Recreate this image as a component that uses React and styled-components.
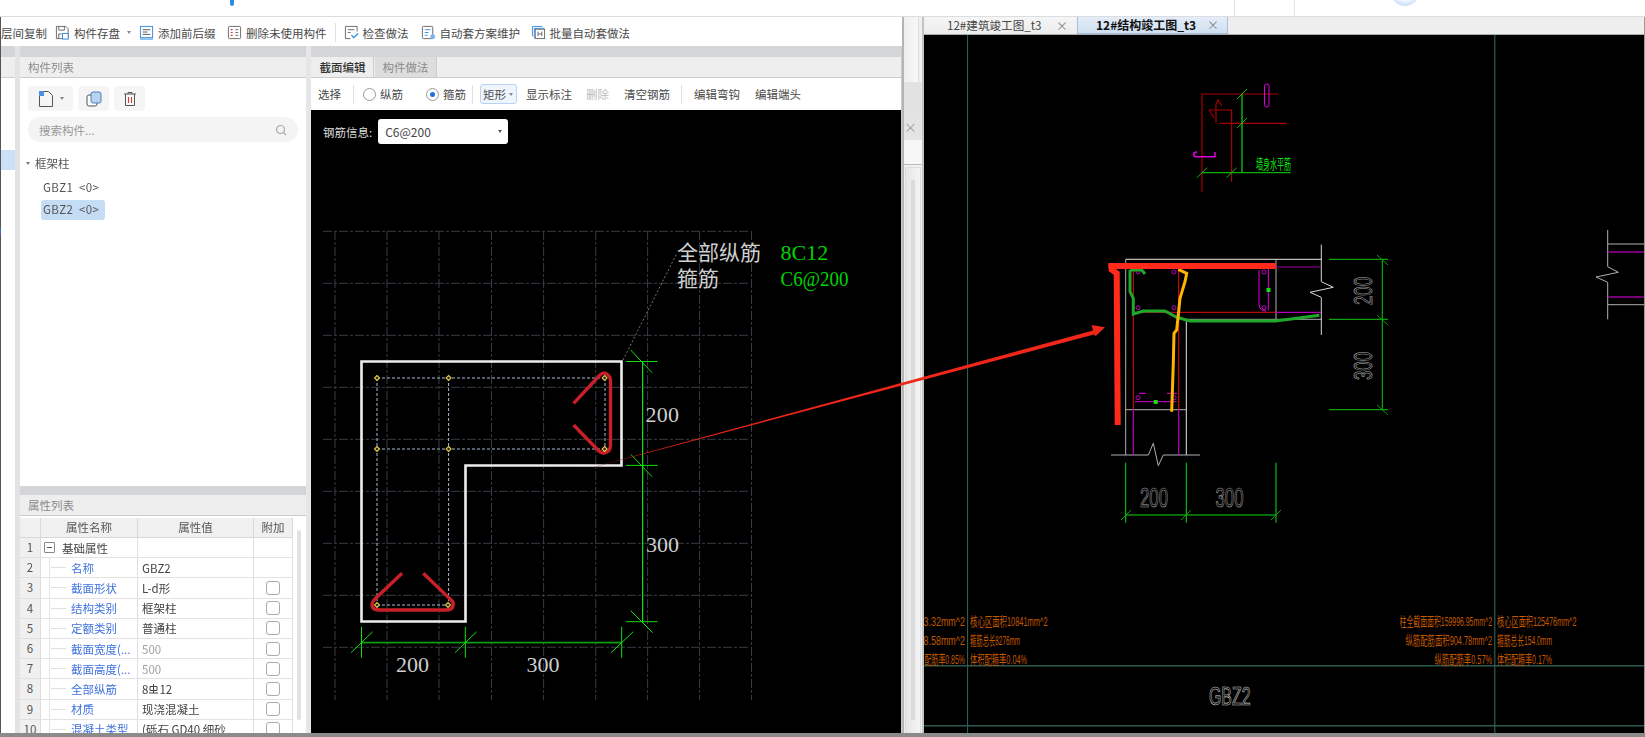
import React from "react";
import styled, { createGlobalStyle } from "styled-components";

const UI = '"Noto Sans CJK SC", "Noto Sans", sans-serif';
const CAD = '"Liberation Serif", "Noto Sans CJK SC", serif';
const THIN = '"Liberation Sans", "Noto Sans CJK SC", sans-serif';

const Global = createGlobalStyle`
  html, body { margin: 0; padding: 0; background: #fff; overflow: hidden; }
  * { box-sizing: border-box; }
`;

const Page = styled.div`
  position: relative; width: 1645px; height: 737px; overflow: hidden;
  display: flex; flex-direction: column; font-family: ${UI}; font-size: 11.5px; color: #444;
`;
const TopStrip = styled.div`
  height: 17px; flex: none; background: #fff; border-bottom: 1px solid #dcdde0;
  display: flex; overflow: hidden;
`;
const TopSliver = styled.div`
  width: 4px; height: 6px; margin-left: 230px; background: #2f8de4; border-radius: 0 0 2px 2px;
`;
const TopDivider = styled.div`
  width: 1px; height: 16px; background: #e4e4e4; margin-left: ${p => p.$ml}px;
`;
const TopBubble = styled.div`
  width: 28px; height: 28px; margin-left: 96px; margin-top: -22px; border-radius: 50%;
  background: radial-gradient(circle at 50% 40%, #fff 45%, #cfe2fa 72%);
`;
const Main = styled.div`flex: 1; display: flex; min-height: 0;`;
const StatusBar = styled.div`height: 4px; flex: none; background: #8b8b8b;`;

const Workspace = styled.div`
  width: 902px; flex: none; display: flex; flex-direction: column; min-height: 0;
  border-left: 1px solid #555; filter: blur(0.35px);
`;
const Toolbar = styled.div`
  height: 29px; flex: none; background: #fff; display: flex; align-items: center; padding-top: 2px;
  white-space: nowrap; overflow: hidden; color: #4a4a4a;
`;
const ToolItem = styled.div`
  display: flex; align-items: center; gap: 4px; margin-left: ${p => p.$ml}px;
`;
const ToolSep = styled.div`
  width: 1px; height: 19px; background: #e0e0e0; margin-left: ${p => p.$ml}px;
`;
const Caret = styled.span`
  display: inline-block; width: 0; height: 0; border-left: 2.5px solid transparent;
  border-right: 2.5px solid transparent; border-top: 3px solid ${p => p.$c || "#888"};
  margin-left: ${p => p.$ml || 0}px; flex: none;
`;
const Body = styled.div`flex: 1; display: flex; min-height: 0;`;

const SideStrip = styled.div`
  width: 19px; flex: none; background: #fff; display: flex; flex-direction: column;
  border-right: 5px solid #e3e3e3; color: #3a6fd8; font-size: 12px;
`;
const SideBand = styled.div`height: 11px; background: #d3d5d8; flex: none;`;
const SideHead = styled.div`height: 21px; background: #eee; flex: none; border-bottom: 1px solid #ccc;`;
const SideBlue = styled.div`height: 20px; background: #cce0f8; flex: none; margin-top: 72px;`;
const SideGlyph = styled.div`height: 14px; margin-top: 53px; margin-left: -3px; line-height: 14px;`;

const ListColumn = styled.div`
  width: 286px; flex: none; display: flex; flex-direction: column; gap: 4px; min-height: 0;
`;
const Band = styled.div`height: ${p => p.$h || 11}px; background: #d3d5d8; flex: none;`;
const ListPanel = styled.div`height: 436px; flex: none; background: #fff; display: flex; flex-direction: column;`;
const PanelHead = styled.div`
  height: 21px; flex: none; background: #eee; border-bottom: 1px solid #ccc; color: #8a8a8a;
  padding-left: 8px; line-height: 21px; font-size: 11.5px;
`;
const IconRow = styled.div`display: flex; gap: 5px; margin: 8px 0 0 8px; height: 25px;`;
const IconBtn = styled.div`
  width: ${p => p.$w}px; height: 25px; background: #f5f5f5; border-radius: 4px;
  display: flex; align-items: center; justify-content: center; gap: 5px;
`;
const SearchBox = styled.div`
  margin: 6px 8px 0; height: 25px; border-radius: 12.5px; background: #f4f4f4; color: #999;
  display: flex; align-items: center; justify-content: space-between; padding: 0 11px;
`;
const TreeGroup = styled.div`
  display: flex; align-items: center; gap: 5px; margin: 12px 0 0 6px; height: 18px; color: #555;
`;
const TreeItem = styled.div`
  margin: ${p => p.$mt}px 0 0 21px; width: 64px; height: 20px; line-height: 19px; padding-left: 2px;
  border-radius: 3px; color: #555; white-space: pre; letter-spacing: 0.35px;
  background: ${p => (p.$on ? "#c5dcf5" : "transparent")};
`;

const PropsPanel = styled.div`flex: 1; min-height: 0; background: #fff; display: flex; flex-direction: column; overflow: hidden;`;
const PropsBody = styled.div`display: flex; flex: 1; min-height: 0; padding-top: 2px;`;
const PropsTable = styled.div`width: 273px; flex: none; overflow: hidden;`;
const PropRow = styled.div`
  display: grid; grid-template-columns: 21px 97px 116px 39px; height: ${p => (p.$head ? 20 : 20.2)}px;
`;
const IndexCell = styled.div`
  background: #f0f0f0; border-right: 1px solid #ddd; border-bottom: 1px solid #e0e0e0; color: #555;
  text-align: center; line-height: 19px;
`;
const HeadCell = styled.div`
  background: #f0f0f0; border-right: 1px solid #d8d8d8; border-bottom: 1px solid #d8d8d8;
  text-align: center; line-height: 19px; color: #555;
`;
const NameCell = styled.div`
  border-right: 1px solid #e0e0e0; border-bottom: 1px solid #e3e3e3; position: relative;
  display: flex; align-items: center; white-space: nowrap; overflow: hidden; height: 100%;
  padding-left: ${p => (p.$root ? 3 : 30)}px; color: ${p => (p.$root ? "#444" : "#3f72dc")};
`;
const TreeDash = styled.span`
  position: absolute; left: 8px; top: 0; bottom: 0; width: 18px;
  border-left: 1px solid #e5e5e5;
  &::after { content: ""; position: absolute; left: 1px; top: 9px; width: 15px; height: 1px; background: #e0e0e0; }
`;
const MinusBox = styled.span`
  width: 11px; height: 11px; border: 1px solid #888; border-radius: 1px; margin-right: 7px; flex: none;
  display: flex; align-items: center; justify-content: center;
  &::after { content: ""; width: 5px; height: 1px; background: #555; }
`;
const ValueCell = styled.div`
  border-right: 1px solid #e0e0e0; border-bottom: 1px solid #e3e3e3; padding-left: 4px; height: 100%;
  display: flex; align-items: center; white-space: nowrap; overflow: hidden;
  color: ${p => (p.$dim ? "#a0a0a0" : "#444")};
`;
const CheckCell = styled.div`
  border-right: 1px solid #e0e0e0; border-bottom: 1px solid #e3e3e3; height: 100%;
  display: flex; align-items: center; justify-content: center;
`;
const CheckBox = styled.span`width: 14px; height: 14px; border: 1px solid #aaa; border-radius: 3px; background: #fff;`;
const ScrollTrack = styled.div`flex: 1; display: flex; justify-content: center; padding-top: 12px;`;
const ScrollThumb = styled.div`width: 4px; height: 190px; background: #e2e2e2; border-radius: 2px; margin-left: -2px;`;

const Splitter = styled.div`width: 5px; flex: none; background: #e6e6e6;`;
const Editor = styled.div`flex: 1; min-width: 0; display: flex; flex-direction: column; min-height: 0; background: #fff; border-right: 1px solid #ccc;`;
const TabStrip = styled.div`
  height: 21px; flex: none; background: #eee; border-bottom: 1px solid #ccc; display: flex; padding-left: 1px;
`;
const EditorTab = styled.div`
  width: 62px; margin-right: 1px; text-align: center; line-height: 21px;
  background: ${p => (p.$on ? "#eee" : "#ddd")}; color: ${p => (p.$on ? "#333" : "#8c8c8c")};
  font-weight: ${p => (p.$on ? 500 : 400)}; border-right: 1px solid #ccc;
`;
const ToolRow = styled.div`
  height: 32px; flex: none; display: flex; align-items: center; white-space: nowrap; color: #4a4a4a;
`;
const ToolText = styled.span`margin-left: ${p => p.$ml}px; color: ${p => (p.$dim ? "#bbb" : "#4a4a4a")};`;
const Radio = styled.span`
  width: 13px; height: 13px; border-radius: 50%; border: 1px solid #999; margin-left: ${p => p.$ml}px;
  flex: none; display: flex; align-items: center; justify-content: center;
  &::after { content: ""; width: 5px; height: 5px; border-radius: 50%; background: ${p => (p.$on ? "#1f6fe0" : "transparent")}; }
`;
const ShapeButton = styled.div`
  width: 37px; height: 20px; margin-left: 7px; background: #eef5fd; border: 1px solid #b9d4f2; border-radius: 3px;
  display: flex; align-items: center; padding-left: 2px; gap: 3px; flex: none;
`;
const Canvas = styled.div`position: relative; flex: 1; background: #000; min-height: 0;`;
const CanvasSvg = styled.svg`position: absolute; inset: 0; display: block; width: 100%; height: 100%;`;
const InfoBar = styled.div`
  position: absolute; left: 12px; top: 9px; display: flex; align-items: center; gap: 6px; color: #ddd;
`;
const RebarSelect = styled.div`
  width: 130px; height: 25px; background: #fff; border-radius: 3px; color: #444; font-size: 12px;
  display: flex; align-items: center; justify-content: space-between; padding: 0 6px 0 7px;
`;

const Gutter = styled.div`
  width: 22px; flex: none; display: flex; flex-direction: column; background: #f0f0f0;
  border-left: 2px solid #b5b5b5; border-right: 2px solid #c4c4c4; filter: blur(0.3px);
`;
const GutterTop = styled.div`height: 65px; flex: none; background: linear-gradient(90deg,#eee,#f8f8f8); border-right: 1px solid #ddd; margin-right: 3px;`;
const GutterMid = styled.div`height: 31px; flex: none; background: #e2e2e2;`;
const GutterTab = styled.div`
  height: 27px; flex: none; background: #e4e4e4; color: #999; font-size: 13px; line-height: 27px; padding-left: 0;
`;
const GutterGap = styled.div`height: 25px; flex: none; background: #f6f6f6; border-bottom: 1px solid #bbb;`;
const GutterInner = styled.div`
  flex: 1; margin: 2px 1px 0 1px; border: 1px solid #dcdcdc; border-bottom: 0; background: linear-gradient(90deg,#e6e6e6,#f4f4f4);
  display: flex; justify-content: center; padding-top: 12px;
`;
const GutterThumb = styled.div`width: 4px; height: 540px; background: #dadada; border-radius: 2px;`;

const Drawing = styled.div`flex: 1; min-width: 0; display: flex; flex-direction: column; min-height: 0; border-right: 1px solid #999;`;
const DrawTabs = styled.div`
  height: 18px; flex: none; background: #eee; display: flex; border-bottom: 1px solid #aaa; padding-left: 1px;
`;
const DrawTab = styled.div`
  width: 151px; margin-right: 1px; display: flex; justify-content: space-between; align-items: center;
  padding: 0 8px 1px ${p => (p.$on ? 18 : 22)}px; font-size: ${p => (p.$on ? 12 : 11.6)}px; color: ${p => (p.$on ? "#111" : "#444")};
  font-weight: ${p => (p.$on ? 700 : 400)}; white-space: nowrap;
  background: ${p => (p.$on ? "linear-gradient(#e4edf8,#cfdff2)" : "linear-gradient(#f6f6f6,#ececec)")};
  border: ${p => (p.$on ? "1px solid #a9bfdc" : "0")}; border-top: 0;
`;
const TabX = styled.span`color: #888; font-weight: 400; font-size: 12px;`;
const DrawCanvas = styled.div`flex: 1; position: relative; background: #000; min-height: 0;`;
const ArrowOverlay = styled.svg`position: absolute; left: 0; top: 0; width: 1645px; height: 737px; pointer-events: none;`;

const LabelText = styled.text`font-family: ${CAD}; font-size: ${p => p.$s || 21}px; fill: ${p => p.$c || "#cfcfcf"};`;
const NarrowText = styled.text`font-family: ${THIN}; font-size: ${p => p.$s}px; fill: ${p => p.$c}; font-weight: 400;`;
const StickText = styled.text`
  font-family: ${THIN}; font-size: ${p => p.$s}px; fill: none; stroke: ${p => p.$c}; stroke-width: 0.7px;
`;

const I = ({ w = 15, h = 15, children, vb = "0 0 16 16" }) => (
  <svg width={w} height={h} viewBox={vb} fill="none" style={{ flex: "none", display: "block" }}>{children}</svg>
);

const DiskIcon = () => (<I><path d="M1.5 1.5h10l2.5 2.5v10.5H1.5z" stroke="#666" /><path d="M4 1.5v4h6v-4M4 14.5v-5h3" stroke="#666" /><rect x="8" y="9" width="6" height="6" fill="#fff" stroke="#2f8de4" /></I>);
const PrefixIcon = () => (<I><rect x="1.5" y="1.5" width="13" height="12" stroke="#2f8de4" /><path d="M4 5h8M4 7.5h5M4 10h8" stroke="#555" /><path d="M1 15h14" stroke="#2f8de4" /></I>);
const DeleteIcon = () => (<I><rect x="1.5" y="1.5" width="13" height="13" rx="1" stroke="#666" /><path d="M4 5h2M4 8h2M4 11h2" stroke="#d33" strokeWidth="1.3" /><path d="M9 5h3M9 8h3M9 11h3" stroke="#666" /></I>);
const CheckIcon = () => (<I><path d="M14 7V1.5H1.5v13H7" stroke="#666" /><path d="M4 5h7M4 8h3" stroke="#666" /><path d="M8 11l2.5 2.5L15 9" stroke="#2f8de4" strokeWidth="1.4" /></I>);
const PlanIcon = () => (<I><rect x="1.5" y="1.5" width="11" height="13" rx="1" stroke="#666" /><path d="M4 5h6M4 8h4M4 11h3" stroke="#2f8de4" /><circle cx="12.5" cy="12.5" r="2.6" fill="#7ab2ea" /></I>);
const BatchIcon = () => (<I><path d="M1.5 12V1.5H12" stroke="#2f8de4" /><path d="M3.5 14V3.5H14" stroke="#2f8de4" /><rect x="4.5" y="4.5" width="10" height="10" stroke="#666" fill="#fff" /><path d="M7.5 7v5M11.5 7v5M7.5 9.5h4" stroke="#666" /></I>);
const NewIcon = () => (<I w={18} h={18} vb="0 0 18 18"><path d="M2.5 1.5h9l4 4v11h-13z" stroke="#555" /><rect x="2" y="1" width="5" height="5" fill="#4a90e2" /></I>);
const CopyIcon = () => (<I w={18} h={18} vb="0 0 18 18"><rect x="2" y="5" width="10" height="11" rx="2" stroke="#555" fill="#fff" /><rect x="6" y="2" width="10" height="11" rx="2" stroke="#4a7fc4" fill="#b9d2ef" /></I>);
const TrashIcon = () => (<I w={18} h={18} vb="0 0 18 18"><path d="M3 4h12M7 4V2.5h4V4M4.5 4v11.5h9V4" stroke="#555" /><path d="M7.5 7v6M10.5 7v6" stroke="#d33" /></I>);
const SearchIcon = () => (<I w={12} h={12} vb="0 0 12 12"><circle cx="5.5" cy="5.5" r="4" stroke="#aaa" strokeWidth="1.2" /><path d="M8.5 8.5L11 11" stroke="#aaa" strokeWidth="1.2" /></I>);
const RebarGlyph = () => (<I w={11} h={11} vb="0 0 11 11"><path d="M2 3.5h7v4H2zM5.5 1v9M1 10h9" stroke="#444" strokeWidth="1" /></I>);

const toolItems = [
  { ml: 8, t: "构件存盘", icon: <DiskIcon />, caret: true },
  { ml: 8.5, t: "添加前后缀", icon: <PrefixIcon /> },
  { ml: 11.5, t: "删除未使用构件", icon: <DeleteIcon /> },
];
const toolItems2 = [
  { ml: 8, t: "检查做法", icon: <CheckIcon /> },
  { ml: 12, t: "自动套方案维护", icon: <PlanIcon /> },
  { ml: 10.5, t: "批量自动套做法", icon: <BatchIcon /> },
];

const props = [
  { n: "基础属性", root: true, v: "" },
  { n: "名称", v: "GBZ2" },
  { n: "截面形状", v: "L-d形", c: 1 },
  { n: "结构类别", v: "框架柱", c: 1 },
  { n: "定额类别", v: "普通柱", c: 1 },
  { n: "截面宽度(...", v: "500", dim: 1, c: 1 },
  { n: "截面高度(...", v: "500", dim: 1, c: 1 },
  { n: "全部纵筋", v: "rebar", c: 1 },
  { n: "材质", v: "现浇混凝土", c: 1 },
  { n: "混凝土类型", v: "(砾石 GD40 细砂", c: 1 },
];

const Line = ({ d, c, w = 1, dash }) => <path d={d} stroke={c} strokeWidth={w} fill="none" strokeDasharray={dash} />;

const gridV = [335, 387, 439, 491.5, 543.6, 595.7, 647.6, 699.6, 751.5];
const gridH = [231.3, 283.3, 335.3, 387.3, 439.3, 491.3, 543.3, 595.3, 647.3];

const Diamond = ({ x, y }) => (
  <path d={`M${x} ${y - 2.5}L${x + 2.5} ${y}L${x} ${y + 2.5}L${x - 2.5} ${y}Z`} fill="#222" stroke="#e4c84a" strokeWidth="1.1" />
);

const SectionDrawing = () => {
  const g = "#12e012";
  return (
    <CanvasSvg viewBox="311 110 590 623">
      {gridH.map(y => <Line key={y} d={`M323 ${y}H749`} c="#363c44" dash="9 2 3 2" />)}
      {gridV.map(x => <Line key={x} d={`M${x} 231V700`} c="#363c44" dash="9 2 3 2" />)}
      <Line d="M623 360L677 253" c="#777" dash="2 2" />
      <Line d="M377 378H605M377 449H605M605 378V449M377 605H448" c="#a9bbd2" dash="3 2" />
      <Line d="M377 378V605M448.6 378V605" c="#a9bbd2" dash="3 2" />
      <Line d="M361.5 361.5H621.5V465.5H465.5V621.5H361.5Z" c="#eeeeee" w={2.6} />
      <Line d="M642.6 361.5V621.7" c={g} w={1.2} />
      <Line d="M626 361.5H657.5M626 465.4H657.5M626 621.7H657.5M630.7 350L652 372.7M630.7 454.3L652 476.7M630.7 610.7L652.7 632.7" c={g} />
      <Line d="M361.5 642.7H621.7" c="#0c9c0c" w={1.8} />
      <Line d="M361.5 626.7V657.7M465.3 626.7V657.7M621.7 626.7V657.7M351 652.7L372.7 631.7M455 652.7L476.7 631.7M611 652.7L633.3 631.7" c={g} />
      <Line d="M573.6 403.3L600 375Q604 371 608 375Q610.5 377 610.5 381V445Q610.5 452 604 453Q600 453 597 449L573.6 425" c="#c81f28" w={3.4} />
      <Line d="M402 573.3L374 600Q370 605 374 609Q376 610 380 610H446Q452 610 453 606Q454 602 451 600L423.3 573.3" c="#c81f28" w={3.4} />
      {[[377, 378], [448.6, 378], [604.6, 378], [377, 449], [448.6, 449], [604.6, 449], [377, 605], [448, 605]].map(([x, y]) => <Diamond key={`${x}-${y}`} x={x} y={y} />)}
      <LabelText x="677" y="259.5">全部纵筋</LabelText>
      <LabelText x="677" y="285.5">箍筋</LabelText>
      <LabelText x="780.5" y="259.5" $c="#00d400" $s={22}>8C12</LabelText>
      <LabelText x="780.5" y="285.5" $c="#00d400" $s={21} textLength="68" lengthAdjust="spacingAndGlyphs">C6@200</LabelText>
      <LabelText x="645.5" y="422" $s={22} textLength="33.5">200</LabelText>
      <LabelText x="646" y="552" $s={22} textLength="33">300</LabelText>
      <LabelText x="396" y="672" $s={22} textLength="33">200</LabelText>
      <LabelText x="526.5" y="672" $s={22} textLength="33">300</LabelText>
    </CanvasSvg>
  );
};

const orange = "#c45a00";
const Note = ({ x, y, len, children, anchor }) => (
  <NarrowText x={x} y={y} $s={13} $c={orange} textLength={len} lengthAdjust="spacingAndGlyphs" textAnchor={anchor}>{children}</NarrowText>
);
const Tick = ({ x, y, s = 5, c = "#12c012" }) => <Line d={`M${x - s} ${y + s}L${x + s} ${y - s}`} c={c} />;
const Hole = ({ x, y }) => <circle cx={x} cy={y} r="2" stroke="#c000c0" fill="none" />;

const PlanDrawing = () => {
  const dr = "#a80000", g = "#0fdc0f", gy = "#b0b0b0", m = "#e000e0", mm = "#9c009c", r = "#e01010";
  return (
    <CanvasSvg viewBox="924 35 720 698">
      <Line d="M967.6 35V733" c="#2f6a5c" />
      <Line d="M1494.7 35V733" c="#234a3e" w={1.6} />
      <Line d="M924 665.7H1644M924 725.7H1644" c="#2b5b50" w={1.6} />
      {/* upper detail */}
      <Line d="M1202 191.7V94H1278.3M1209 110H1231.6V181.7M1219.6 123.3H1286.6M1216 123V104L1218 100L1222 106M1209 110L1214 118" c={dr} w={1.2} />
      <Line d="M1242 94V172.7" c={g} w={1.2} />
      <Line d="M1202 172.7H1290.8" c="#0bb00b" w={1.2} />
      <Tick x={1242} y={94} /><Tick x={1242} y={123} /><Tick x={1202} y={172.7} /><Tick x={1231.6} y={172.7} />
      <rect x="1264.5" y="84" width="4.5" height="23" rx="2.2" stroke={m} fill="none" />
      <Line d="M1215 152V156.7H1196Q1193.7 156.7 1193.7 154.5Q1193.7 152 1197 152" c={m} w={1.5} />
      <NarrowText x="1256" y="169" $s={14} $c="#10e010" textLength="35" lengthAdjust="spacingAndGlyphs">墙身水平筋</NarrowText>
      {/* section outline */}
      <Line d="M1125.7 259.3H1321.7M1186.3 319.3V455" c="#e8e8e8" />
      <Line d="M1125.7 259.3V455M1276 259.3V319.3M1186.3 319.3H1321.7M1125.7 409.7H1186.3" c={gy} />
      <Line d="M1111 455H1148.3L1153.3 443.3L1158.3 465.7L1163.3 455H1200" c={gy} />
      <Line d="M1321.3 244.7V281.7L1333.3 287.3L1310 292.3L1321.3 297.3V335" c="#d8d8d8" />
      <Line d="M1133.3 270V410M1178.7 270V410" c={r} />
      <Line d="M1133.3 410V455M1178.7 410V455" c={m} />
      <Line d="M1133.3 312.3H1276" c={r} />
      <Line d="M1276 312.3H1321M1268.3 269V310M1135 401.7H1176.7" c={m} />
      <Line d="M1276 267H1321" c={mm} w={1.2} />
      <Line d="M1259 270V305Q1260 311 1266 311M1139 393.3H1146M1167 393.3H1177" c={m} />
      {[[1138, 272], [1174, 272], [1138, 307.7], [1174, 307.7], [1264, 272], [1264, 307.7], [1138, 397.7], [1174, 397.7]].map(([x, y]) => <Hole key={`${x}-${y}`} x={x} y={y} />)}
      <rect x="1266.5" y="288" width="4" height="4" fill="#10e010" />
      <rect x="1153.7" y="400" width="4" height="4" fill="#10e010" />
      {/* dimensions */}
      <Line d="M1382.3 259.3V409.7" c="#10c810" />
      <Line d="M1329 259.3H1388M1329 319.3H1388M1329 409.7H1388" c="#10c810" />
      <Line d="M1377 255L1388 265M1377 315L1388 325M1377 405L1388 415" c="#0c9c0c" />
      <Line d="M1125.7 515H1276" c={g} />
      <Line d="M1125.7 462.7V522.7M1186.3 462.7V522.7M1276 462.7V522.7" c={g} />
      <Line d="M1121 520L1131 510M1181 520L1191 510M1271 520L1281 510" c="#0c9c0c" />
      <StickText x="1140" y="506.5" $s={27} $c="#a8a8a8" textLength="28" lengthAdjust="spacingAndGlyphs">200</StickText>
      <StickText x="1215.5" y="506.5" $s={27} $c="#a8a8a8" textLength="28" lengthAdjust="spacingAndGlyphs">300</StickText>
      <StickText x="1372" y="305" $s={26} $c="#a8a8a8" textLength="28" lengthAdjust="spacingAndGlyphs" transform="rotate(-90 1372 305)">200</StickText>
      <StickText x="1372" y="380" $s={26} $c="#a8a8a8" textLength="28" lengthAdjust="spacingAndGlyphs" transform="rotate(-90 1372 380)">300</StickText>
      {/* hand marks */}
      <Line d="M1130 270H1141.7L1145 274M1130 270V291.7L1133.3 298.3V314L1143.3 311H1165L1176.7 317.3L1190 321H1275L1293.3 318.7L1319.3 315.3" c="#1fa82a" w={3} />
      <Line d="M1178.3 269.3L1186.7 273.3L1185 281.7L1180 298.3L1178.3 315L1176.7 330L1174 333.3L1173.3 363.3L1171.7 411.7" c="#ffb400" w={3} />
      <Line d="M1108.3 266H1275.7" c="#ff2a1a" w={6} />
      <Line d="M1110 268.3L1116.7 273.3L1117.7 425" c="#ff2a1a" w={6} />
      {/* far-right section */}
      <Line d="M1607.7 230V266.7L1618.3 272.3L1596 277L1607.7 282.3V319.3M1607.7 244H1644M1607.7 304.7H1644" c={gy} />
      <Line d="M1607.7 252H1644M1607.7 297H1644" c={mm} w={1.4} />
      {/* notes */}
      <Note x="923.5" y="626" len="41.5">3.32mm^2</Note>
      <Note x="970" y="626" len="77.5">核心区面积10841mm^2</Note>
      <Note x="923.5" y="645" len="41.5">8.58mm^2</Note>
      <Note x="970" y="645" len="50">箍筋总长8276mm</Note>
      <Note x="924.5" y="664" len="40.5">配筋率0.85%</Note>
      <Note x="970" y="664" len="57">体积配箍率0.04%</Note>
      <Note x="1399.5" y="626" len="92.5">柱全截面面积159996.95mm^2</Note>
      <Note x="1497" y="626" len="79.5">核心区面积125476mm^2</Note>
      <Note x="1405.5" y="645" len="86.5">纵筋配筋面积904.78mm^2</Note>
      <Note x="1497" y="645" len="55">箍筋总长154.0mm</Note>
      <Note x="1434.5" y="664" len="57.5">纵筋配筋率0.57%</Note>
      <Note x="1497" y="664" len="55">体积配箍率0.17%</Note>
      <StickText x="1209" y="705" $s={26} $c="#d0d0d0" textLength="41.5" lengthAdjust="spacingAndGlyphs">GBZ2</StickText>
    </CanvasSvg>
  );
};

export default function App() {
  return (
    <Page>
      <Global />
      <TopStrip>
        <TopSliver />
        <TopDivider $ml={1000} />
        <TopDivider $ml={59} />
        <TopBubble />
      </TopStrip>
      <Main>
        <Workspace>
          <Toolbar>
            <ToolItem $ml={0}>层间复制</ToolItem>
            {toolItems.map(it => (
              <ToolItem key={it.t} $ml={it.ml}>
                {it.icon}<span>{it.t}</span>{it.caret && <Caret $ml={2.5} />}
              </ToolItem>
            ))}
            <ToolSep $ml={8} />
            {toolItems2.map(it => (
              <ToolItem key={it.t} $ml={it.ml}>{it.icon}<span>{it.t}</span></ToolItem>
            ))}
          </Toolbar>
          <Body>
            <SideStrip>
              <SideBand /><SideHead />
              <SideBlue />
              <SideGlyph>)</SideGlyph>
            </SideStrip>
            <ListColumn>
              <ListPanel>
                <Band />
                <PanelHead>构件列表</PanelHead>
                <IconRow>
                  <IconBtn $w={45}><NewIcon /><Caret /></IconBtn>
                  <IconBtn $w={31}><CopyIcon /></IconBtn>
                  <IconBtn $w={31}><TrashIcon /></IconBtn>
                </IconRow>
                <SearchBox>搜索构件...<SearchIcon /></SearchBox>
                <TreeGroup><Caret $c="#777" />框架柱</TreeGroup>
                <TreeItem $mt={6}>GBZ1  &lt;0&gt;</TreeItem>
                <TreeItem $mt={2} $on>GBZ2  &lt;0&gt;</TreeItem>
              </ListPanel>
              <PropsPanel>
                <Band $h={9} />
                <PanelHead>属性列表</PanelHead>
                <PropsBody>
                  <PropsTable>
                    <PropRow $head>
                      <HeadCell /><HeadCell>属性名称</HeadCell><HeadCell>属性值</HeadCell><HeadCell>附加</HeadCell>
                    </PropRow>
                    {props.map((p, i) => (
                      <PropRow key={p.n}>
                        <IndexCell>{i + 1}</IndexCell>
                        <NameCell $root={p.root}>
                          {p.root ? <MinusBox /> : <TreeDash />}{p.n}
                        </NameCell>
                        <ValueCell $dim={p.dim}>
                          {p.v === "rebar" ? <>8<RebarGlyph />12</> : p.v}
                        </ValueCell>
                        <CheckCell>{p.c && <CheckBox />}</CheckCell>
                      </PropRow>
                    ))}
                  </PropsTable>
                  <ScrollTrack><ScrollThumb /></ScrollTrack>
                </PropsBody>
              </PropsPanel>
            </ListColumn>
            <Splitter />
            <Editor>
              <Band />
              <TabStrip>
                <EditorTab $on>截面编辑</EditorTab>
                <EditorTab>构件做法</EditorTab>
              </TabStrip>
              <ToolRow>
                <ToolText $ml={7}>选择</ToolText>
                <ToolSep $ml={12} />
                <Radio $ml={9} />
                <ToolText $ml={4}>纵筋</ToolText>
                <Radio $ml={23} $on />
                <ToolText $ml={4}>箍筋</ToolText>
                <ToolSep $ml={6} />
                <ShapeButton>矩形<Caret /></ShapeButton>
                <ToolText $ml={9}>显示标注</ToolText>
                <ToolText $ml={14} $dim>删除</ToolText>
                <ToolText $ml={15}>清空钢筋</ToolText>
                <ToolSep $ml={11} />
                <ToolText $ml={12}>编辑弯钩</ToolText>
                <ToolText $ml={15}>编辑端头</ToolText>
              </ToolRow>
              <Canvas>
                <SectionDrawing />
                <InfoBar>钢筋信息:
                  <RebarSelect>C6@200<Caret $c="#555" /></RebarSelect>
                </InfoBar>
              </Canvas>
            </Editor>
          </Body>
        </Workspace>
        <Gutter>
          <GutterTop />
          <GutterMid />
          <GutterTab>×</GutterTab>
          <GutterGap />
          <GutterInner><GutterThumb /></GutterInner>
        </Gutter>
        <Drawing>
          <DrawTabs>
            <DrawTab>12#建筑竣工图_t3<TabX>×</TabX></DrawTab>
            <DrawTab $on>12#结构竣工图_t3<TabX>×</TabX></DrawTab>
          </DrawTabs>
          <DrawCanvas><PlanDrawing /></DrawCanvas>
        </Drawing>
      </Main>
      <StatusBar />
      <ArrowOverlay viewBox="0 0 1645 737">
        <defs>
          <linearGradient id="shaft" gradientUnits="userSpaceOnUse" x1="570" y1="473" x2="650" y2="451">
            <stop offset="0" stopColor="#4a0808" />
            <stop offset="1" stopColor="#f0261a" />
          </linearGradient>
        </defs>
        <polygon points="570,473.5 1093,330.5 1091.7,325 1105,327.3 1095.7,336 1094,334.5" fill="url(#shaft)" />
      </ArrowOverlay>
    </Page>
  );
}
